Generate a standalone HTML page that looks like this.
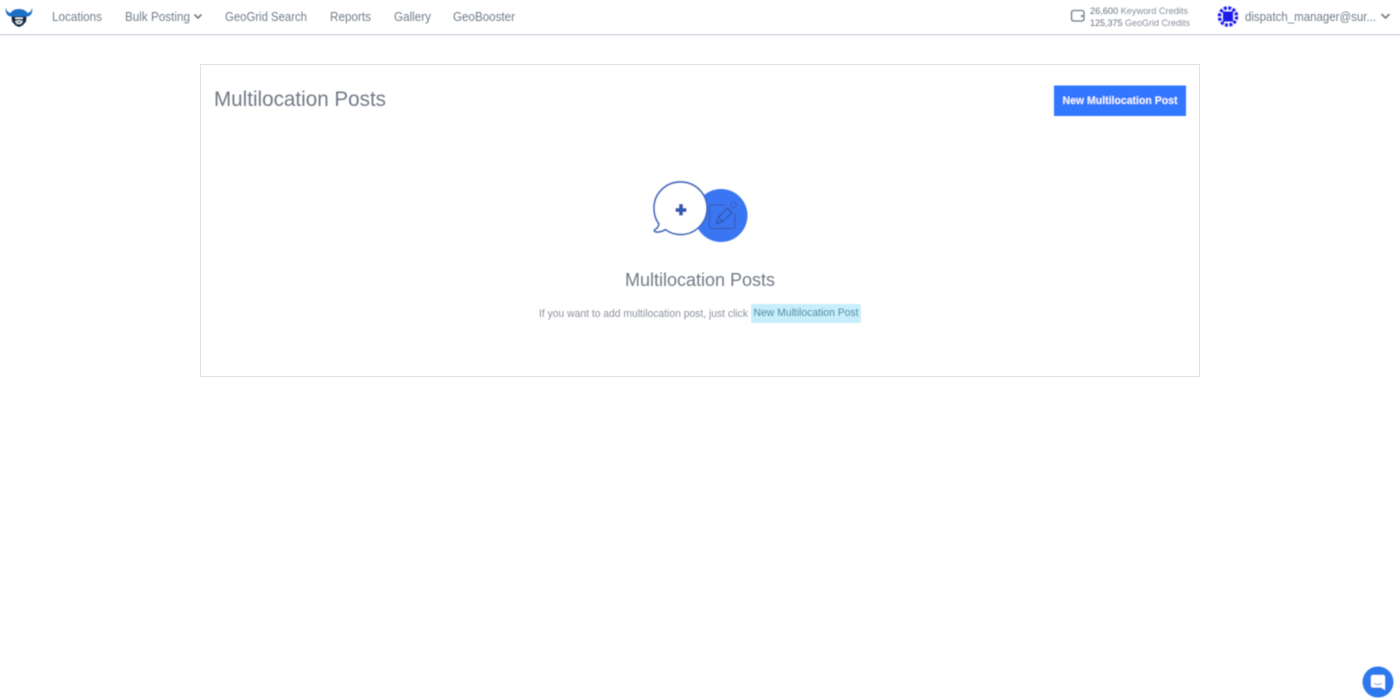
<!DOCTYPE html>
<html lang="en">
<head>
<meta charset="utf-8">
<title>Multilocation Posts</title>
<style>
html,body{margin:0;padding:0;width:1400px;height:700px;overflow:hidden;background:#fff}
svg{display:block;position:absolute;left:0;top:0}
text{font-family:"Liberation Sans",sans-serif}
</style>
</head>
<body>
<svg width="1400" height="700" viewBox="0 0 1400 700" xmlns="http://www.w3.org/2000/svg">
<defs>
<filter id="soft" x="-5%" y="-5%" width="110%" height="110%"><feGaussianBlur stdDeviation="0.4"/></filter>
</defs>
<rect width="1400" height="700" fill="#fff"/>
<!-- nav -->
<rect x="0" y="34" width="1400" height="1" fill="#d3dae3"/>
<rect x="0" y="35" width="1400" height="1" fill="#eef1f5"/>
<g filter="url(#soft)">
<!-- logo -->
<path d="M6 7.500 C6.500 11 8 12.500 10.500 13 C12 10.500 15 9 19 9 C23 9 26 10.500 27.500 13 C30 12.500 31.500 11 32 7.500 C33 12.500 31 16 27.500 16.500 L10.500 16.500 C7 16 5 12.500 6 7.500Z" fill="#1f6fc4"/>
<path d="M11.500 16.500 L26.500 16.500 L26 21.500 L22.500 25.500 L19 27 L15.500 25.500 L12 21.500Z" fill="#13253f"/>
<path d="M15 17.500 L23 17.500 L22.500 19 L15.500 19Z" fill="#e8edf3"/>
<path d="M15 21 L19 20.200 L23 21 L21 24 L17 24Z" fill="#e8edf3"/>
<path d="M17.200 21.800 L20.800 21.800 L19.800 23 L18.200 23Z" fill="#13253f"/>
<g font-size="12.500" fill="#727d8c">
<text x="52" y="21" textLength="50" lengthAdjust="spacingAndGlyphs">Locations</text>
<text x="125" y="21" textLength="65" lengthAdjust="spacingAndGlyphs">Bulk Posting</text>
<text x="225" y="21" textLength="82" lengthAdjust="spacingAndGlyphs">GeoGrid Search</text>
<text x="330" y="21" textLength="41" lengthAdjust="spacingAndGlyphs">Reports</text>
<text x="394" y="21" textLength="37" lengthAdjust="spacingAndGlyphs">Gallery</text>
<text x="453" y="21" textLength="62" lengthAdjust="spacingAndGlyphs">GeoBooster</text>
</g>
<path d="M194.500 14.500 L198 18 L201.500 14.500" fill="none" stroke="#6f7a89" stroke-width="1.600"/>
<!-- wallet -->
<rect x="1071.500" y="10.500" width="12.500" height="10.500" rx="2.200" fill="none" stroke="#6f7a89" stroke-width="1.300"/>
<path d="M1073 10.500 L1082 10.500" stroke="#6f7a89" stroke-width="1"/>
<rect x="1081" y="15" width="2" height="2" fill="#6f7a89"/>
<text x="1090" y="14" font-size="9.500" fill="#858e9b" textLength="98" lengthAdjust="spacingAndGlyphs"><tspan fill="#66707e">26,600</tspan> Keyword Credits</text>
<text x="1090" y="26" font-size="9.500" fill="#858e9b" textLength="100" lengthAdjust="spacingAndGlyphs"><tspan fill="#66707e">125,375</tspan> GeoGrid Credits</text>
<!-- avatar -->
<circle cx="1228" cy="16.500" r="8.600" fill="none" stroke="#2323f0" stroke-width="3.400" stroke-dasharray="3 1.500"/>
<rect x="1223" y="11.500" width="10" height="10" fill="#1f1fee"/>
<text x="1245" y="21" font-size="12.500" fill="#727d8c" textLength="131" lengthAdjust="spacingAndGlyphs">dispatch_manager@sur...</text>
<path d="M1381.500 14 L1385.500 18 L1389.500 14" fill="none" stroke="#6f7a89" stroke-width="1.600"/>
</g>
<!-- card -->
<rect x="200.500" y="64.500" width="999" height="312" fill="#fff" stroke="#dfe1e3" stroke-width="1"/>
<g filter="url(#soft)">
<text x="214" y="106" font-size="21" fill="#727a85" textLength="172" lengthAdjust="spacingAndGlyphs">Multilocation Posts</text>
<rect x="1054" y="85.500" width="132" height="30.500" fill="#3377ff"/>
<text x="1062.500" y="104" font-size="10.800" font-weight="700" fill="#f2f6ff" textLength="115" lengthAdjust="spacingAndGlyphs">New Multilocation Post</text>
<!-- illustration -->
<circle cx="721" cy="215.500" r="26.500" fill="#3a76f2"/>
<path d="M725 204.800 H711.500 A2 2 0 0 0 709.500 206.800 V226.500 A2 2 0 0 0 711.500 228.500 H733 A2 2 0 0 0 735 226.500 V213" fill="none" stroke="#3a5fc0" stroke-width="1.400"/>
<path d="M716.500 223.500 L718.500 217 L727.500 208 L732 212.500 L723 221.500 Z M718.500 217 L723 221.500" fill="none" stroke="#3559b5" stroke-width="1.500" stroke-linejoin="round"/>
<circle cx="733.500" cy="205" r="2.700" fill="#3a76f2" stroke="#3a5fc0" stroke-width="1.100"/>
<path d="M680.500 182 C665.500 182 654 194 654 208 C654 215 656 220 659 224 C658.500 227 656.500 229 654.500 230 C654 231 655 232 657 232 C660 232 663 231 665.500 229.500 C669.500 232.500 675 234.500 680.500 234.500 C695.500 234.500 707 222.500 707 208 C707 194 695.500 182 680.500 182Z" fill="#fff" stroke="#3f68bd" stroke-width="1.700"/>
<path d="M679 204 H683 V208 H686.500 V212 H683 V215.500 H679 V212 H675.500 V208 H679Z" fill="#3559b5"/>
<!-- center text -->
<text x="625" y="286" font-size="18" fill="#727a85" textLength="150" lengthAdjust="spacingAndGlyphs">Multilocation Posts</text>
<text x="539" y="317" font-size="11" fill="#8b929b" textLength="209" lengthAdjust="spacingAndGlyphs">If you want to add multilocation post, just click</text>
<rect x="751" y="304" width="110" height="19" rx="1.500" fill="#c8eefb"/>
<text x="753.500" y="316" font-size="11" fill="#2f7f9c" textLength="105" lengthAdjust="spacingAndGlyphs">New Multilocation Post</text>
<!-- chat bubble -->
<circle cx="1378" cy="682" r="15.500" fill="#2f78ee"/>
<path d="M1373 675 H1383 A2 2 0 0 1 1385 677 V690 L1381 687.500 H1373 A2 2 0 0 1 1371 685.500 V677 A2 2 0 0 1 1373 675Z" fill="#fff"/>
<path d="M1374 683.500 Q1378 685.500 1382 683.500" fill="none" stroke="#2f78ee" stroke-width="0.900"/>
</g>
</svg>
</body>
</html>
